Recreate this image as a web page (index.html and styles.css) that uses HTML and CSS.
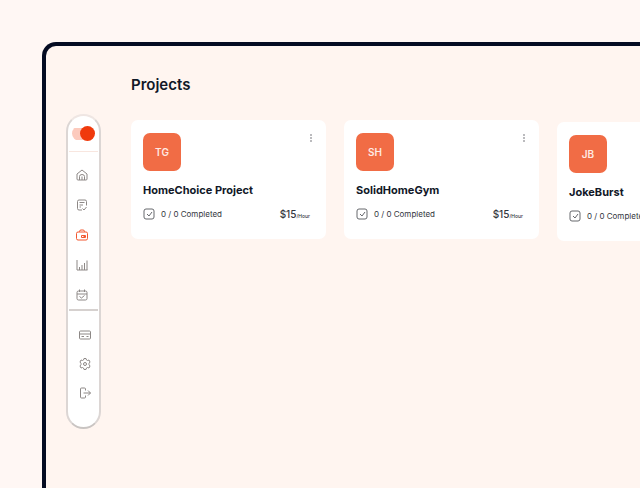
FILE: index.html
```html
<!DOCTYPE html>
<html lang="en">
<head>
  <meta charset="utf-8">
  <title>Projects</title>
  <link rel="stylesheet" href="styles.css">
</head>
<body>
  <div class="window">
    <nav class="sidebar">
      <div class="sidebar-top">
        <input type="checkbox" class="switch" aria-label="Active" checked>
      </div>
      <div class="sidebar-links">
        <a href="#" aria-label="Home"><svg viewBox="0 0 24 24"><path d="M2 10 12 2l10 8v10a2 2 0 0 1-2 2H4a2 2 0 0 1-2-2z"/><path d="M7 22v-7a5 4 0 0 1 10 0v7M12 15v7"/></svg></a>
        <a href="#" aria-label="Notes"><svg viewBox="0 0 24 24"><path d="M12 22H6a3 3 0 0 1-3-3V5a3 3 0 0 1 3-3h12a3 3 0 0 1 3 3v8M7 7h10M7 12h7M7 16h3M13 19l3 3 5-6"/></svg></a>
        <a href="#" aria-label="Projects" class="active"><svg viewBox="0 0 24 24"><rect x="1" y="6" width="22" height="16" rx="3"/><path d="M7 6V5a3 3 0 0 1 3-3h4a3 3 0 0 1 3 3v1M19 13h-8v4h8zM15 15h4"/></svg></a>
        <a href="#" aria-label="Reports"><svg viewBox="0 0 24 24"><path d="M2 2v20h21M7 22v-6M12 22V12M17 22V8M22 22V3"/></svg></a>
        <a href="#" aria-label="Calendar"><svg viewBox="0 0 24 24"><rect x="2" y="4" width="20" height="18" rx="3"/><path d="M7 1v5M17 1v5M2 10h20M7 15l4 3 6-5"/></svg></a>
      </div>
      <div class="sidebar-links sidebar-bottom">
        <a href="#" aria-label="Billing"><svg viewBox="0 0 24 24"><rect x="1" y="4" width="22" height="16" rx="2"/><path d="M1 10h22M5 15h5M15 15h4"/></svg></a>
        <a href="#" aria-label="Settings"><svg viewBox="0 0 24 24"><path d="M9 4l1-3h4l1 3 2 1 3-1 2 4-2 3v2l2 3-2 4-3-1-2 1-1 3h-4l-1-3-2-1-3 1-2-4 2-3v-2L2 8l2-4 3 1z"/><circle cx="12" cy="12" r="3"/></svg></a>
        <a href="#" aria-label="Log out"><svg viewBox="0 0 24 24"><path d="M13 7V4a2 2 0 0 0-2-2H5a2 2 0 0 0-2 2v16a2 2 0 0 0 2 2h6a2 2 0 0 0 2-2v-3M9 12h14M18 7l5 5-5 5"/></svg></a>
      </div>
    </nav>

    <main class="content">
      <h1>Projects</h1>
      <div class="cards">
        <section class="card">
          <div class="card-head">
            <div class="avatar">TG</div>
            <button class="more" aria-label="More"><svg viewBox="0 0 4 10"><circle cx="2" cy="2" r="1"/><circle cx="2" cy="5" r="1"/><circle cx="2" cy="8" r="1"/></svg></button>
          </div>
          <h2>HomeChoice Project</h2>
          <div class="card-info">
            <svg class="tick" viewBox="0 0 12 12"><rect x="1" y="1" width="10" height="10" rx="2"/><path d="M4 6l2 2 3-4"/></svg>
            <span>0 / 0 Completed</span>
            <div class="price">$15<small>/Hour</small></div>
          </div>
        </section>

        <section class="card">
          <div class="card-head">
            <div class="avatar">SH</div>
            <button class="more" aria-label="More"><svg viewBox="0 0 4 10"><circle cx="2" cy="2" r="1"/><circle cx="2" cy="5" r="1"/><circle cx="2" cy="8" r="1"/></svg></button>
          </div>
          <h2>SolidHomeGym</h2>
          <div class="card-info">
            <svg class="tick" viewBox="0 0 12 12"><rect x="1" y="1" width="10" height="10" rx="2"/><path d="M4 6l2 2 3-4"/></svg>
            <span>0 / 0 Completed</span>
            <div class="price">$15<small>/Hour</small></div>
          </div>
        </section>

        <section class="card card-low">
          <div class="card-head">
            <div class="avatar">JB</div>
            <button class="more" aria-label="More"><svg viewBox="0 0 4 10"><circle cx="2" cy="2" r="1"/><circle cx="2" cy="5" r="1"/><circle cx="2" cy="8" r="1"/></svg></button>
          </div>
          <h2>JokeBurst</h2>
          <div class="card-info">
            <svg class="tick" viewBox="0 0 12 12"><rect x="1" y="1" width="10" height="10" rx="2"/><path d="M4 6l2 2 3-4"/></svg>
            <span>0 / 0 Completed</span>
            <div class="price">$15<small>/Hour</small></div>
          </div>
        </section>
      </div>
    </main>
  </div>
</body>
</html>
```

FILE: styles.css
```css
* {
  box-sizing: border-box;
}

body {
  margin: 0;
  padding: 42px 0 0 42px;
  background-color: #fff7f4;
  color: #111827;
  font-family: Inter, "Liberation Sans", sans-serif;
  overflow: hidden;
}

.window {
  display: flex;
  align-items: flex-start;
  min-height: calc(100vh - 42px);
  padding-left: 20px;
  border: 4px solid #050c22;
  border-right: none;
  border-bottom: none;
  border-top-left-radius: 14px;
  background-color: #fff5f0;
}

/* sidebar */
.sidebar {
  flex: none;
  width: 35px;
  margin-top: 68px;
  padding-bottom: 28px;
  border: 2px solid #dcd6d4;
  border-top-color: #efe6e3;
  border-bottom-color: #c9c4c2;
  border-radius: 18px;
  background-color: white;
}

.sidebar-top {
  height: 36px;
  padding: 10px 0 0 3px;
  margin: 0 1px;
  border-bottom: 1px solid #f8e6df;
}

.switch {
  appearance: none;
  display: flex;
  justify-content: flex-end;
  align-items: center;
  width: 23px;
  height: 15px;
  margin: 0;
  border-radius: 8px;
  background: linear-gradient(#fccabd, #fccabd) left center / 16px 12px no-repeat;
  cursor: pointer;
}

.switch::before {
  content: "";
  width: 15px;
  height: 15px;
  border-radius: 50%;
  background-color: #f03a0c;
}

.sidebar-links {
  display: flex;
  flex-direction: column;
  align-items: center;
  gap: 18px;
  margin: 0 1px;
  padding: 17px 3px 8px 0;
}

.sidebar-links a {
  width: 12px;
  height: 12px;
  color: #8d8886;
}

.sidebar-links .active {
  color: #f2572f;
}

.sidebar-links svg {
  display: block;
  width: 12px;
  height: 12px;
  fill: none;
  stroke: currentColor;
  stroke-width: 2;
}

.sidebar-bottom {
  gap: 17px;
  padding: 18px 0 0 2px;
  border-top: 2px solid #d6d1cf;
}

/* projects */
.content {
  flex: 1;
  min-width: 0;
  margin-left: 30px;
  padding-top: 29px;
}

h1 {
  margin: 0 0 25px;
  font-size: 15px;
  line-height: 20px;
  font-weight: 600;
}

.cards {
  display: flex;
  align-items: flex-start;
  gap: 18px;
}

.card {
  flex: 0 0 195px;
  padding: 13px 13px 19px 12px;
  border-radius: 7px;
  background-color: white;
}

.card-low {
  margin-top: 2px;
}

.card-head {
  display: flex;
  justify-content: space-between;
  align-items: flex-start;
}

.avatar {
  width: 38px;
  height: 38px;
  border-radius: 7px;
  background-color: #f16c45;
  color: #ffe9e2;
  font-size: 10px;
  line-height: 38px;
  font-weight: 600;
  text-align: center;
}

.more {
  padding: 0;
  border: none;
  background: none;
  cursor: pointer;
}

.more svg {
  display: block;
  width: 4px;
  height: 10px;
  fill: #a5a5a8;
}

h2 {
  margin: 11px 0 10px;
  font-size: 11px;
  line-height: 16px;
  font-weight: 700;
}

.card-info {
  display: flex;
  align-items: center;
  height: 12px;
  font-size: 8px;
  color: #33363d;
}

.tick {
  width: 12px;
  height: 12px;
  margin-right: 6px;
  fill: none;
  stroke: #66686d;
}

.price {
  margin: 0 3px 0 auto;
  font-size: 10px;
  font-weight: 500;
}

.price small {
  font-size: 5px;
}
```
